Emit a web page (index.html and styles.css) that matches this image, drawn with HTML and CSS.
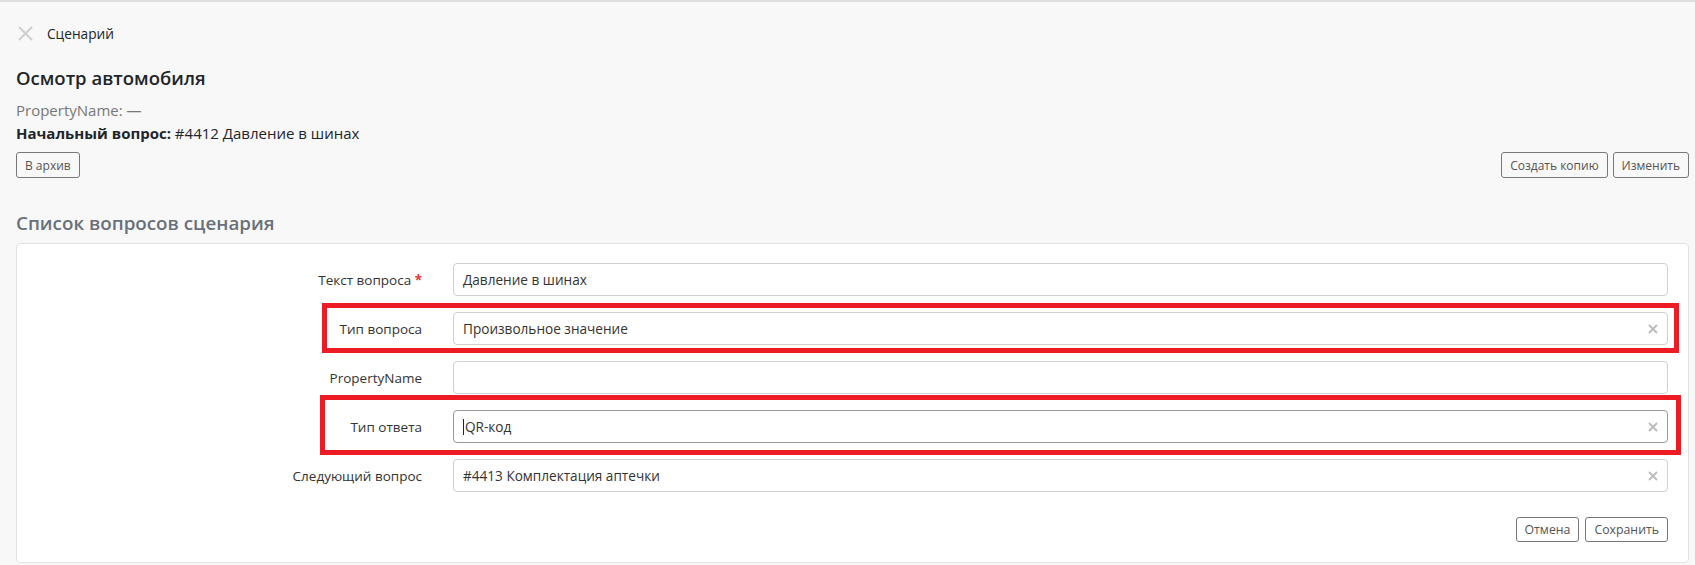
FILE: index.html
```html
<html lang="ru">
<head>
  <meta charset="UTF-8" />
  <meta name="viewport" content="width=device-width, initial-scale=1.0" />
  <title>Сценарий</title>
  <link rel="stylesheet" href="styles.css">
</head>
<body>
  <div class="page">
    <div class="crumb">
      <svg class="crumb-close" width="15" height="15" viewBox="0 0 15 15">
        <path d="M1 1 L14 14 M14 1 L1 14" stroke="#cfcfcf" stroke-width="2" fill="none" />
      </svg>
      <span>Сценарий</span>
    </div>

    <h1 class="title">Осмотр автомобиля</h1>
    <div class="meta muted">PropertyName: —</div>
    <div class="meta"><b>Начальный вопрос:</b> #4412 Давление в шинах</div>

    <div class="toolbar">
      <button class="btn">В архив</button>
      <div class="toolbar-right">
        <button class="btn">Создать копию</button>
        <button class="btn">Изменить</button>
      </div>
    </div>

    <h2 class="section-title">Список вопросов сценария</h2>

    <div class="card">
      <div class="form-row">
        <label class="form-label">Текст вопроса <span class="req">*</span></label>
        <div class="field">Давление в шинах</div>
      </div>

      <div class="form-row">
        <label class="form-label">Тип вопроса</label>
        <div class="field select">
          <span>Произвольное значение</span>
          <svg class="clear" width="10" height="10" viewBox="0 0 10 10">
            <path d="M1 1 L9 9 M9 1 L1 9" stroke="#bdbdbd" stroke-width="2" fill="none" />
          </svg>
        </div>
        <div class="mark mark-one"></div>
      </div>

      <div class="form-row">
        <label class="form-label">PropertyName</label>
        <div class="field"></div>
      </div>

      <div class="form-row">
        <label class="form-label">Тип ответа</label>
        <div class="field select focused">
          <span><i class="caret"></i>QR-код</span>
          <svg class="clear" width="10" height="10" viewBox="0 0 10 10">
            <path d="M1 1 L9 9 M9 1 L1 9" stroke="#bdbdbd" stroke-width="2" fill="none" />
          </svg>
        </div>
        <div class="mark mark-two"></div>
      </div>

      <div class="form-row">
        <label class="form-label">Следующий вопрос</label>
        <div class="field select">
          <span>#4413 Комплектация аптечки</span>
          <svg class="clear" width="10" height="10" viewBox="0 0 10 10">
            <path d="M1 1 L9 9 M9 1 L1 9" stroke="#bdbdbd" stroke-width="2" fill="none" />
          </svg>
        </div>
      </div>

      <div class="form-actions">
        <button class="btn">Отмена</button>
        <button class="btn">Сохранить</button>
      </div>
    </div>
  </div>
</body>
</html>
```

FILE: styles.css
```css
    :root {
      --bg: #f8f8f8;
      --text: #212529;
      --muted: #777;
      --card: #ffffff;
      --border: #d0d0d0;
      --mark: #ed1c24;
    }

    body {
      margin: 0;
      font-family: 'Open Sans', 'Noto Sans', sans-serif;
      background-color: var(--bg);
      color: var(--text);
      border-top: 2px solid #dedede;
    }

    .page {
      padding: 21px 6px 0 16px;
    }

    .crumb {
      display: flex;
      align-items: center;
      gap: 14px;
      height: 20px;
      font-size: 13.7px;
      padding-left: 2px;
    }

    .title {
      margin: 23px 0 0;
      font-size: 18.5px;
      line-height: 24px;
      font-weight: 600;
    }

    .meta {
      font-size: 15px;
      line-height: 23px;
    }

    .muted {
      margin-top: 9px;
      color: var(--muted);
    }

    .meta b {
      font-weight: 700;
    }

    .toolbar {
      display: flex;
      justify-content: space-between;
      margin-top: 7px;
    }

    .toolbar-right {
      display: flex;
      gap: 5px;
    }

    .btn {
      height: 26px;
      padding: 0 8px;
      font-family: inherit;
      font-size: 12px;
      color: #555;
      background: transparent;
      border: 1px solid #777;
      border-radius: 3px;
      cursor: pointer;
    }

    .section-title {
      margin: 31px 0 6px;
      font-size: 18.8px;
      line-height: 28px;
      font-weight: 600;
      color: #68707b;
    }

    .card {
      background: var(--card);
      border: 1px solid #e2e2e2;
      border-radius: 4px;
      padding: 19px 20px 20px 0;
      display: flex;
      flex-direction: column;
      gap: 16px;
    }

    .form-row {
      position: relative;
      display: grid;
      grid-template-columns: 405px 1fr;
      column-gap: 31px;
      align-items: center;
    }

    .form-label {
      text-align: right;
      font-size: 13.5px;
      color: #333;
    }

    .req {
      color: #e53935;
      font-weight: 700;
    }

    .field {
      height: 33px;
      box-sizing: border-box;
      border: 1px solid var(--border);
      border-radius: 4px;
      padding: 0 9px;
      display: flex;
      align-items: center;
      justify-content: space-between;
      font-size: 13.6px;
      color: #333;
      background: #fff;
    }

    .field.focused {
      border-color: #999;
    }

    .caret {
      display: inline-block;
      width: 1px;
      height: 16px;
      margin-right: 1px;
      vertical-align: -3px;
      background: #222;
    }

    .clear {
      flex: none;
    }

    .mark {
      position: absolute;
      border: 5px solid var(--mark);
      pointer-events: none;
    }

    .mark-one {
      left: 305px;
      right: -11px;
      top: -9px;
      bottom: -8px;
    }

    .mark-two {
      left: 303px;
      right: -13px;
      top: -15px;
      bottom: -12px;
    }

    .form-actions {
      display: flex;
      justify-content: flex-end;
      gap: 6px;
      margin-top: 9px;
    }

    .form-actions .btn {
      height: 25px;
      font-size: 12.3px;
    }
```
